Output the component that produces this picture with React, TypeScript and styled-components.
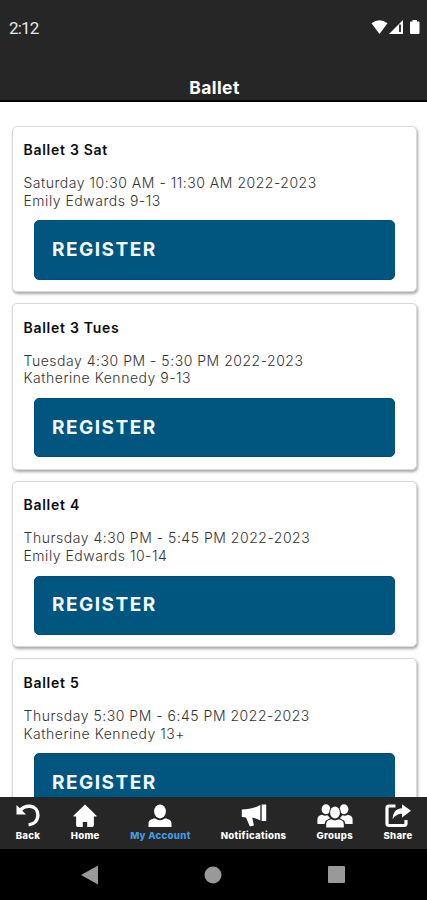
import React from "react";
import styled, { createGlobalStyle } from "styled-components";

const GlobalStyle = createGlobalStyle`
  *, *::before, *::after { box-sizing: border-box; }
  body { margin: 0; background: #fff; font-family: Inter, "Liberation Sans", sans-serif; }
`;

const Screen = styled.div`
  display: flex;
  flex-direction: column;
  width: 427px;
  height: 900px;
  overflow: hidden;
  background: #fff;
`;

const Header = styled.header`
  flex: none;
  display: flex;
  flex-direction: column;
  height: 102px;
  background: #262626;
  border-bottom: 2px solid #050505;
`;

const StatusBar = styled.div`
  display: flex;
  align-items: center;
  justify-content: space-between;
  height: 54px;
  padding: 0 7px 0 9px;
`;

const Clock = styled.span`
  font: 400 17px/20px Roboto, sans-serif;
  letter-spacing: -0.8px;
  color: #e6e6e6;
  padding-top: 1px;
`;

const StatusIcons = styled.div`
  display: flex;
  align-items: center;
`;

const Title = styled.h1`
  margin: 0;
  padding: 23px 0 0 2px;
  text-align: center;
  font-size: 17.5px;
  font-weight: 700;
  line-height: 22px;
  letter-spacing: 0.4px;
  color: #fff;
`;

const List = styled.main`
  flex: 1;
  min-height: 0;
  overflow: hidden;
  display: flex;
  flex-direction: column;
  gap: 11px;
  padding: 23.5px 10px 0 11.5px;
`;

const Card = styled.article`
  flex: none;
  height: 166.6px;
  padding: 14.5px 22px 0 11px;
  border: 1.5px solid #d9d9d9;
  border-radius: 5px;
  background: #fff;
  box-shadow: 1px 2px 3px rgba(0, 0, 0, 0.35);
`;

const CardTitle = styled.h2`
  margin: 0 0 15px;
  font-size: 14px;
  font-weight: 600;
  line-height: 18px;
  letter-spacing: 0.72px;
  color: #0c0c0c;
`;

const Detail = styled.p`
  margin: 0;
  font-size: 14px;
  font-weight: 300;
  line-height: 17.75px;
  letter-spacing: 0.52px;
  color: #333;
`;

const RegisterButton = styled.button`
  display: block;
  width: 361px;
  height: 59.5px;
  margin: 10.9px 0 0 10px;
  padding: 0 17.5px;
  border: 1px solid #004c7c;
  border-radius: 5px;
  background: #00567f;
  color: #f4f8ff;
  text-align: left;
  font: 700 19px/22px Inter, sans-serif;
  letter-spacing: 1.5px;
`;

const TabBar = styled.nav`
  flex: none;
  display: flex;
  justify-content: space-between;
  height: 52.5px;
  padding: 7.5px 14px 0 15.5px;
  background: #262626;
`;

const Tab = styled.a<{ $active?: boolean; $width: number }>`
  display: flex;
  flex-direction: column;
  align-items: center;
  width: ${(p) => p.$width}px;
  color: ${(p) => (p.$active ? "#3f9fe0" : "#fff")};
  font-size: 9.6px;
  font-weight: 800;
  line-height: 13px;
  letter-spacing: 0.3px;
  white-space: nowrap;
  svg { display: block; flex: none; margin-bottom: 1px; color: #fff; }
`;

const SystemBar = styled.footer`
  flex: none;
  display: flex;
  justify-content: space-between;
  align-items: center;
  height: 51px;
  padding: 0 82px 0 81px;
  background: #000;
`;

const icons: Record<string, { w: number; art: React.ReactNode }> = {
  Back: {
    w: 24,
    art: (
      <>
        <path d="M0.5 1v9.500h9.500L6.800 7.200z" fill="currentColor" />
        <path d="M4.200 6.200C7 3.200 10.500 1.900 14.200 2.300c4.700.5 7.700 4.100 7.700 8.700 0 5.400-3.900 9.200-9.300 9.900" fill="none" stroke="currentColor" strokeWidth="3.400" />
      </>
    ),
  },
  Home: {
    w: 24,
    art: <path d="M12 .5.6 11.400c-.5.6-.2 1.100.5 1.100h2v8.800q0 1.700 1.700 1.700h5v-5h4.400v5h5q1.700 0 1.700-1.700v-8.800h2c.7 0 1-.5.5-1.100z" fill="currentColor" />,
  },
  "My Account": {
    w: 24,
    art: (
      <>
        <ellipse cx="12" cy="7.400" rx="5.900" ry="7" fill="currentColor" />
        <path d="M.5 23v-3.200c0-3 1.500-4.300 6.200-5.500q5.300 3.800 10.600 0c4.700 1.200 6.200 2.500 6.200 5.500V23z" fill="currentColor" />
      </>
    ),
  },
  Notifications: {
    w: 26,
    art: <path d="M.8 5.500C7.500 5.500 14 4 19.300 1v15.500c-2.800-1.600-5.300-2.500-8-3l1.600 7.900-4 1.200L5 13.500.8 13zM20.700 .5h4.500v16.500h-4.500z" fill="currentColor" />,
  },
  Groups: {
    w: 36,
    art: (
      <g fill="currentColor">
        <ellipse cx="9" cy="5.200" rx="4.400" ry="5" />
        <ellipse cx="27" cy="5.200" rx="4.400" ry="5" />
        <path d="M.4 20v-4.300c0-2.800 1.200-4 4.600-5q2.800 1.800 5.500.6l2.700 3-4.500 2.500-1.200 3.200zM35.600 20v-4.300c0-2.800-1.200-4-4.600-5q-2.800 1.800-5.500.6l-2.700 3 4.500 2.500 1.200 3.200z" />
        <ellipse cx="18" cy="8.500" rx="5.800" ry="7" fill="#262626" />
        <ellipse cx="18" cy="8.500" rx="4.900" ry="6.100" />
        <path d="M9.200 23.500v-3.200c0-2.800 1.500-4 5-5q3.800 2.300 7.600 0c3.500 1 5 2.200 5 5v3.200z" />
      </g>
    ),
  },
  Share: {
    w: 26,
    art: (
      <>
        <path d="M10.500 2H4Q2 2 2 4v15.500q0 2 2 2h15q2 0 2-2V16" fill="none" stroke="currentColor" strokeWidth="3.200" />
        <path d="M17 .2 26 6.800l-9 6.700V9.800c-3.800 0-6.500 1.400-9.300 5.400C7.700 8.500 11.200 4.500 17 4.200z" fill="currentColor" />
      </>
    ),
  },
};

const classes = [
  { name: "Ballet 3 Sat", time: "Saturday 10:30 AM - 11:30 AM 2022-2023", teacher: "Emily Edwards 9-13" },
  { name: "Ballet 3 Tues", time: "Tuesday 4:30 PM - 5:30 PM 2022-2023", teacher: "Katherine Kennedy 9-13" },
  { name: "Ballet 4", time: "Thursday 4:30 PM - 5:45 PM 2022-2023", teacher: "Emily Edwards 10-14" },
  { name: "Ballet 5", time: "Thursday 5:30 PM - 6:45 PM 2022-2023", teacher: "Katherine Kennedy 13+" },
];

const tabs = [
  { label: "Back", width: 25 },
  { label: "Home", width: 30 },
  { label: "My Account", width: 61, active: true },
  { label: "Notifications", width: 66 },
  { label: "Groups", width: 37 },
  { label: "Share", width: 30 },
];

export default function App() {
  return (
    <Screen>
      <GlobalStyle />
      <Header>
        <StatusBar>
          <Clock>2:12</Clock>
          <StatusIcons>
            <svg width="49" height="16" viewBox="0 0 49 16" fill="#fff">
              <path d="M0.500 4.200Q8.500-1.800 16.500 4.200L8.500 15z" />
              <path d="M18 15 32 1v14z" />
              <path d="M29 5.500v7.500" stroke="#262626" strokeWidth="1.800" />
              <path d="M40 2.500h1.500V1h4.500v1.500h1.500q1 0 1 1V14q0 1-1 1h-7.500q-1 0-1-1V3.500q0-1 1-1z" />
            </svg>
          </StatusIcons>
        </StatusBar>
        <Title>Ballet</Title>
      </Header>
      <List>
        {classes.map((c) => (
          <Card key={c.name}>
            <CardTitle>{c.name}</CardTitle>
            <Detail>{c.time}</Detail>
            <Detail>{c.teacher}</Detail>
            <RegisterButton>REGISTER</RegisterButton>
          </Card>
        ))}
      </List>
      <TabBar>
        {tabs.map((t) => (
          <Tab key={t.label} $width={t.width} $active={t.active}>
            <svg width={icons[t.label].w} height="24" viewBox={`0 0 ${icons[t.label].w} 24`}>
              {icons[t.label].art}
            </svg>
            {t.label}
          </Tab>
        ))}
      </TabBar>
      <SystemBar>
        <svg width="17" height="20" viewBox="0 0 17 20"><path d="M0 10 17 .5v19z" fill="#999" /></svg>
        <svg width="18" height="18" viewBox="0 0 18 18"><circle cx="9" cy="9" r="8.500" fill="#999" /></svg>
        <svg width="17" height="17" viewBox="0 0 17 17"><rect width="17" height="17" rx="1" fill="#999" /></svg>
      </SystemBar>
    </Screen>
  );
}
